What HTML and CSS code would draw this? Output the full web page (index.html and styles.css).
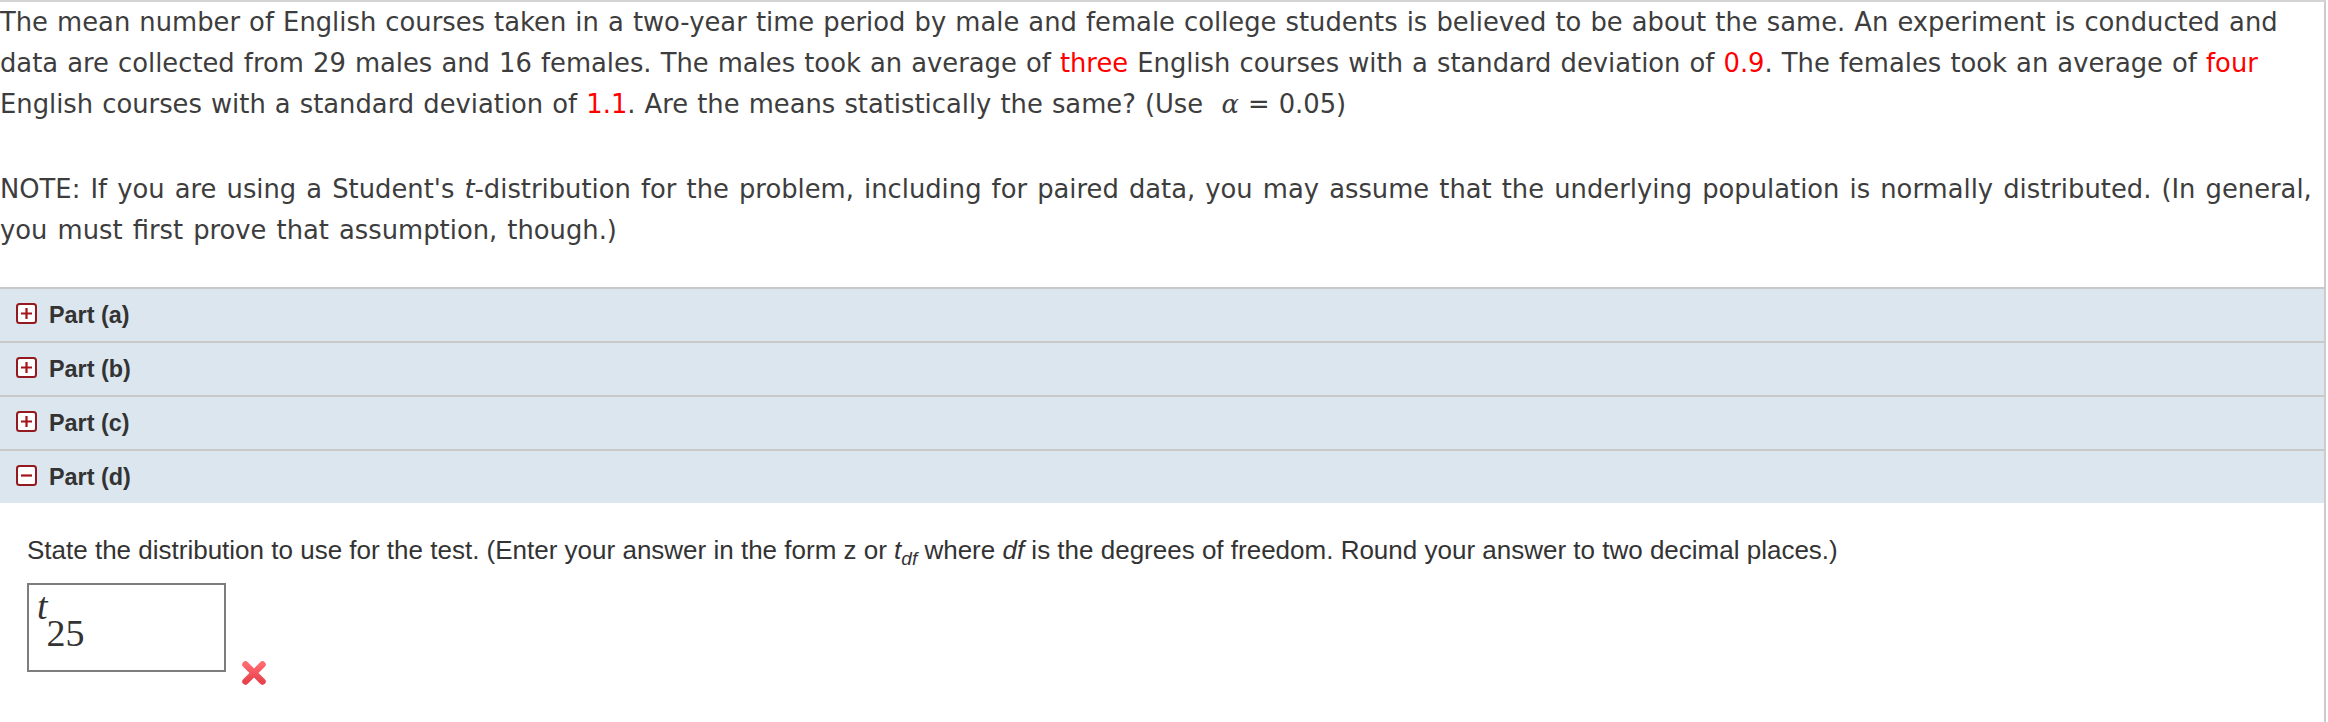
FILE: index.html
```html
<!DOCTYPE html>
<html lang="en">
<head>
<meta charset="utf-8">
<title>Question</title>
<link rel="stylesheet" href="styles.css">
</head>
<body>
<div class="question">
  <div class="stem">
    <p class="para">The mean number of English courses taken in a two-year time period by male and female college students is believed to be about the same. An experiment is conducted and<br>data are collected from 29 males and 16 females. The males took an average of <span class="red">three</span> English courses with a standard deviation of <span class="red">0.9</span>. The females took an average of <span class="red">four</span><br>English courses with a standard deviation of <span class="red">1.1</span>. Are the means statistically the same? (Use &nbsp;<span class="math">α</span> = 0.05)</p>
    <p class="para note">NOTE: If you are using a Student's <i>t</i>-distribution for the problem, including for paired data, you may assume that the underlying population is normally distributed. (In general,<br>you must first prove that assumption, though.)</p>
  </div>
  <div class="parts">
    <div class="part-row">
      <span class="toggle"><svg viewBox="0 0 21 21" width="21" height="21"><rect x="1" y="1" width="19" height="19" rx="2.5" fill="#fff" stroke="#931a1e" stroke-width="2"/><path d="M5 10.5h11M10.5 5v11" stroke="#a3141b" stroke-width="2.2"/></svg></span>
      <span class="part-label">Part (a)</span>
    </div>
    <div class="part-row">
      <span class="toggle"><svg viewBox="0 0 21 21" width="21" height="21"><rect x="1" y="1" width="19" height="19" rx="2.5" fill="#fff" stroke="#931a1e" stroke-width="2"/><path d="M5 10.5h11M10.5 5v11" stroke="#a3141b" stroke-width="2.2"/></svg></span>
      <span class="part-label">Part (b)</span>
    </div>
    <div class="part-row">
      <span class="toggle"><svg viewBox="0 0 21 21" width="21" height="21"><rect x="1" y="1" width="19" height="19" rx="2.5" fill="#fff" stroke="#931a1e" stroke-width="2"/><path d="M5 10.5h11M10.5 5v11" stroke="#a3141b" stroke-width="2.2"/></svg></span>
      <span class="part-label">Part (c)</span>
    </div>
    <div class="part-row">
      <span class="toggle"><svg viewBox="0 0 21 21" width="21" height="21"><rect x="1" y="1" width="19" height="19" rx="2.5" fill="#fff" stroke="#931a1e" stroke-width="2"/><path d="M5 10.5h11" stroke="#a3141b" stroke-width="2.2"/></svg></span>
      <span class="part-label">Part (d)</span>
    </div>
  </div>
  <div class="part-body">
    <p class="instr">State the distribution to use for the test. (Enter your answer in the form z or <i>t</i><sub class="sub"><i>df</i></sub> where <i>df</i> is the degrees of freedom. Round your answer to two decimal places.)</p>
    <div class="answer-row">
      <div class="answer-box"><span class="mt">t</span><span class="mn">25</span></div>
      <span class="wrong"><svg viewBox="0 0 26 26" width="26" height="26"><defs><linearGradient id="xg" x1="0" y1="0" x2="0" y2="1"><stop offset="0" stop-color="#ff6a70"/><stop offset="1" stop-color="#e8424c"/></linearGradient></defs><path d="M4.5 4.5L21.5 21.5M21.5 4.5L4.5 21.5" stroke="url(#xg)" stroke-width="6.5" stroke-linecap="round"/></svg></span>
    </div>
  </div>
</div>
</body>
</html>
```

FILE: styles.css
```css
html, body {
  margin: 0;
  padding: 0;
  background: #ffffff;
}

.question {
  width: 2324px;
  border-top: 2px solid #d4d4d4;
  border-right: 2px solid #cccccc;
  min-height: 720px;
}

.stem {
  font-family: "DejaVu Sans", Verdana, sans-serif;
  font-size: 25.8px;
  word-spacing: 0.9px;
  line-height: 41px;
  color: #3d3d3d;
  white-space: nowrap;
}

.para {
  margin: 0;
}

.note {
  margin-top: 44px;
  word-spacing: 1.9px;
}

.red {
  color: #ff0000;
}

.math {
  font-family: "DejaVu Serif", "Liberation Serif", serif;
  font-style: italic;
}

.parts {
  margin-top: 36px;
}

.part-row {
  display: flex;
  align-items: center;
  gap: 12px;
  height: 52px;
  padding-left: 16px;
  border-top: 2px solid #c9c9c9;
  background: #dce6ef;
}

.toggle {
  display: flex;
  width: 21px;
  height: 21px;
  margin-top: -3px;
}

.part-label {
  font-family: "Liberation Sans", Arial, sans-serif;
  font-weight: bold;
  font-size: 23.4px;
  color: #333333;
}

.part-body {
  padding: 32px 0 0 27px;
}

.instr {
  margin: 0;
  font-family: "Liberation Sans", Arial, sans-serif;
  font-size: 26px;
  line-height: 30px;
  color: #333333;
}

.sub {
  font-size: 19px;
  line-height: 0;
  vertical-align: -6px;
}

.answer-row {
  display: flex;
  align-items: flex-start;
  gap: 15px;
  margin-top: 18px;
}

.answer-box {
  box-sizing: content-box;
  width: 187px;
  height: 85px;
  padding-left: 8px;
  border: 2px solid #7d7d7d;
  font-family: "Liberation Serif", "DejaVu Serif", serif;
  color: #333333;
  line-height: 1;
}

.mt {
  display: inline-block;
  font-style: italic;
  font-size: 38px;
  margin-top: 2px;
  vertical-align: top;
}

.mn {
  display: inline-block;
  font-size: 38px;
  margin-top: 29px;
  margin-left: -1px;
  vertical-align: top;
}

.wrong {
  display: flex;
  margin-top: 77px;
}
```
